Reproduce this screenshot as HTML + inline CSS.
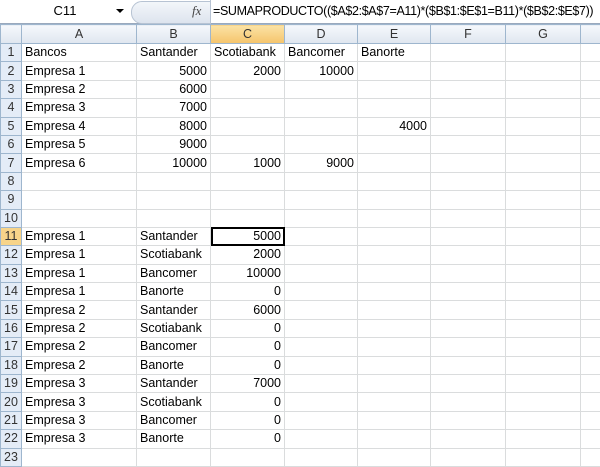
<!DOCTYPE html>
<html><head><style>
body{margin:0;width:600px;height:454px;overflow:hidden;background:#fff;font-family:"Liberation Sans",sans-serif;font-size:12.5px;color:#000;position:relative}
#fb{position:absolute;left:0;top:0;width:600px;height:23px;background:#fff;border-bottom:1px solid #9aa9bd}
#nb{position:absolute;left:0;top:0;width:130px;height:22px;background:#fff;text-align:center;line-height:22px;font-size:13px}
#nb span{position:absolute;left:116px;top:9px;width:0;height:0;border-left:4px solid transparent;border-right:4px solid transparent;border-top:4px solid #000}
#btn{position:absolute;left:131px;top:1px;width:78px;height:21px;background:linear-gradient(#f3f6fa,#dde4ee);border:1px solid #b7c3d3;border-radius:11px 0 0 11px}
#fx{position:absolute;left:192px;top:3px;font-family:"Liberation Serif",serif;font-style:italic;font-size:13px;color:#444}
#ft{position:absolute;left:210px;top:0;height:22px;line-height:22px;font-size:12.5px;border-left:1px solid #b7c3d3;padding-left:2px;width:390px;white-space:nowrap;letter-spacing:-0.35px;overflow:hidden}
table{position:absolute;left:0;top:24px;border-collapse:collapse;table-layout:fixed;width:620px}
td{border:1px solid #dadcdd;height:17.4px;padding:0 3px;white-space:nowrap;overflow:hidden;line-height:17px}
td.r{text-align:right}
th{background:linear-gradient(#f5f8fc,#dfe6ef);border:1px solid #9eb6ce;font-weight:normal;height:18px;color:#333;padding:0}
td.h{background:#e4ecf7;border:1px solid #9eb6ce;text-align:center;padding:0;color:#333}
th.s{background:linear-gradient(#fbe3a6,#f5c46c)}
td.hs{background:#f7d48a}
td.sel{outline:2px solid #000;outline-offset:-2px}
</style></head><body>
<div id="fb"><div id="nb">C11<span></span></div><div id="btn"></div><div id="fx">fx</div><div id="ft">=SUMAPRODUCTO(($A$2:$A$7=A11)*($B$1:$E$1=B11)*($B$2:$E$7))</div></div>
<table>
<colgroup><col style="width:21px"><col style="width:115px"><col style="width:74px"><col style="width:74px"><col style="width:73px"><col style="width:73px"><col style="width:75px"><col style="width:75px"><col style="width:40px"></colgroup>
<tr><th></th><th>A</th><th>B</th><th class="s">C</th><th>D</th><th>E</th><th>F</th><th>G</th><th></th></tr>
<tr><td class="h">1</td><td>Bancos</td><td>Santander</td><td>Scotiabank</td><td>Bancomer</td><td>Banorte</td><td></td><td></td><td></td></tr>
<tr><td class="h">2</td><td>Empresa 1</td><td class="r">5000</td><td class="r">2000</td><td class="r">10000</td><td></td><td></td><td></td><td></td></tr>
<tr><td class="h">3</td><td>Empresa 2</td><td class="r">6000</td><td></td><td></td><td></td><td></td><td></td><td></td></tr>
<tr><td class="h">4</td><td>Empresa 3</td><td class="r">7000</td><td></td><td></td><td></td><td></td><td></td><td></td></tr>
<tr><td class="h">5</td><td>Empresa 4</td><td class="r">8000</td><td></td><td></td><td class="r">4000</td><td></td><td></td><td></td></tr>
<tr><td class="h">6</td><td>Empresa 5</td><td class="r">9000</td><td></td><td></td><td></td><td></td><td></td><td></td></tr>
<tr><td class="h">7</td><td>Empresa 6</td><td class="r">10000</td><td class="r">1000</td><td class="r">9000</td><td></td><td></td><td></td><td></td></tr>
<tr><td class="h">8</td><td></td><td></td><td></td><td></td><td></td><td></td><td></td><td></td></tr>
<tr><td class="h">9</td><td></td><td></td><td></td><td></td><td></td><td></td><td></td><td></td></tr>
<tr><td class="h">10</td><td></td><td></td><td></td><td></td><td></td><td></td><td></td><td></td></tr>
<tr><td class="h hs">11</td><td>Empresa 1</td><td>Santander</td><td class="r sel">5000</td><td></td><td></td><td></td><td></td><td></td></tr>
<tr><td class="h">12</td><td>Empresa 1</td><td>Scotiabank</td><td class="r">2000</td><td></td><td></td><td></td><td></td><td></td></tr>
<tr><td class="h">13</td><td>Empresa 1</td><td>Bancomer</td><td class="r">10000</td><td></td><td></td><td></td><td></td><td></td></tr>
<tr><td class="h">14</td><td>Empresa 1</td><td>Banorte</td><td class="r">0</td><td></td><td></td><td></td><td></td><td></td></tr>
<tr><td class="h">15</td><td>Empresa 2</td><td>Santander</td><td class="r">6000</td><td></td><td></td><td></td><td></td><td></td></tr>
<tr><td class="h">16</td><td>Empresa 2</td><td>Scotiabank</td><td class="r">0</td><td></td><td></td><td></td><td></td><td></td></tr>
<tr><td class="h">17</td><td>Empresa 2</td><td>Bancomer</td><td class="r">0</td><td></td><td></td><td></td><td></td><td></td></tr>
<tr><td class="h">18</td><td>Empresa 2</td><td>Banorte</td><td class="r">0</td><td></td><td></td><td></td><td></td><td></td></tr>
<tr><td class="h">19</td><td>Empresa 3</td><td>Santander</td><td class="r">7000</td><td></td><td></td><td></td><td></td><td></td></tr>
<tr><td class="h">20</td><td>Empresa 3</td><td>Scotiabank</td><td class="r">0</td><td></td><td></td><td></td><td></td><td></td></tr>
<tr><td class="h">21</td><td>Empresa 3</td><td>Bancomer</td><td class="r">0</td><td></td><td></td><td></td><td></td><td></td></tr>
<tr><td class="h">22</td><td>Empresa 3</td><td>Banorte</td><td class="r">0</td><td></td><td></td><td></td><td></td><td></td></tr>
<tr><td class="h">23</td><td></td><td></td><td></td><td></td><td></td><td></td><td></td><td></td></tr>
</table>
</body></html>
